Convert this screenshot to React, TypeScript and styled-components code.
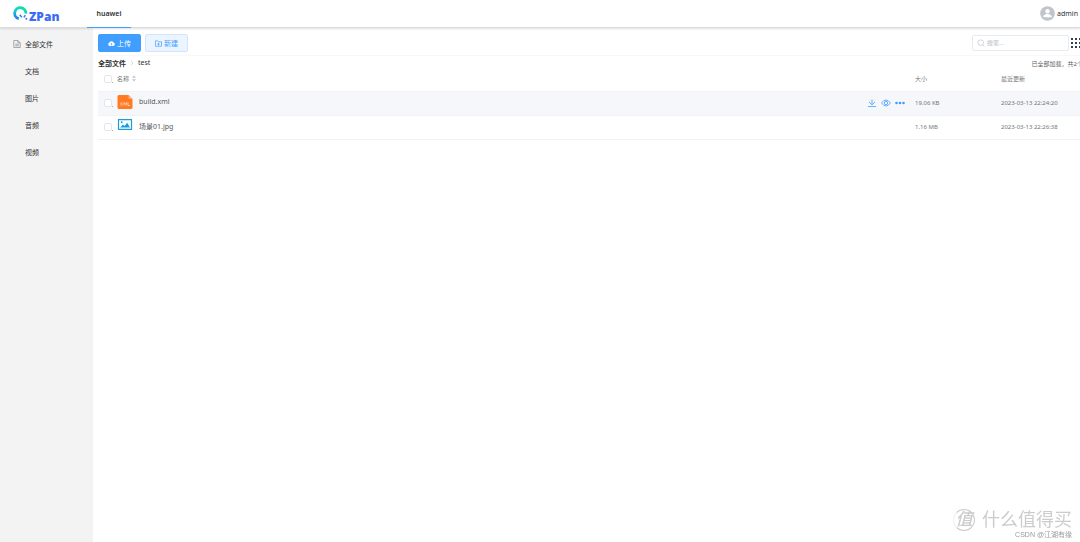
import React from "react";
import styled, { createGlobalStyle, css } from "styled-components";

const Global = createGlobalStyle`
  * { box-sizing: border-box; }
  html, body { margin: 0; overflow: hidden; background: #fff; }
  body, button, input, table {
    font-family: "Noto Sans", "Noto Sans CJK SC", sans-serif;
    font-size: 7px;
    color: #303133;
  }
`;

const Page = styled.div`
  display: flex;
  flex-direction: column;
  min-height: 100vh;
`;

const Header = styled.header`
  position: relative;
  display: flex;
  align-items: center;
  height: 28px;
  padding: 0 2px 0 13px;
  background: #fff;
  border-bottom: 1px solid #dcdcdc;
  box-shadow: 0 1px 2px rgba(0, 0, 0, 0.12);
`;

const Brand = styled.a`
  display: flex;
  align-items: center;
  width: 74px;
  height: 26px;
`;

const Tab = styled.a`
  display: flex;
  align-items: center;
  justify-content: center;
  width: 44px;
  height: 28px;
  margin-bottom: -1px;
  border-bottom: 1px solid #409eff;
  color: #303133;
  font-weight: 600;
  text-decoration: none;
`;

const User = styled.button`
  display: flex;
  align-items: center;
  gap: 2px;
  margin-left: auto;
  padding: 0;
  border: 0;
  background: none;
`;

const Body = styled.div`
  display: flex;
  flex: 1;
`;

const Sidebar = styled.nav`
  flex: none;
  width: 93px;
  padding-top: 2px;
  background: #f3f3f3;
`;

const NavLink = styled.a`
  display: flex;
  align-items: center;
  gap: 4px;
  height: 27px;
  padding-left: 13px;
  color: #303133;
  text-decoration: none;
`;

const NavIcon = styled.span`
  display: flex;
  width: 8px;
`;

const Main = styled.main`
  flex: 1;
  min-width: 0;
  padding: 6px 0 0 5px;
  overflow: hidden;
`;

const Toolbar = styled.div`
  display: flex;
  align-items: center;
  gap: 4px;
  height: 18px;
`;

const Button = styled.button<{ $primary?: boolean }>`
  display: flex;
  align-items: center;
  justify-content: center;
  gap: 2px;
  width: 43px;
  height: 18px;
  padding: 0;
  border: 1px solid #d0e6ff;
  border-radius: 2px;
  background: #ecf5ff;
  color: #409eff;
  ${(p) =>
    p.$primary &&
    css`
      border-color: #409eff;
      background: #409eff;
      color: #fff;
    `}
`;

const Search = styled.label`
  display: flex;
  align-items: center;
  gap: 2px;
  width: 97px;
  height: 16px;
  margin-left: auto;
  padding: 0 4px;
  border: 1px solid #e8eaef;
  border-radius: 2px;
`;

const SearchInput = styled.input`
  flex: 1;
  min-width: 0;
  padding: 0;
  border: 0;
  outline: 0;
  font-size: 6px;
  &::placeholder { color: #b4b8c0; }
`;

const GridButton = styled.button`
  display: flex;
  flex: none;
  margin: 0 -1px 0 -2px;
  padding: 0;
  border: 0;
  background: none;
`;

const PathBar = styled.div`
  display: flex;
  align-items: center;
  justify-content: space-between;
  height: 14px;
  margin-top: 3px;
  border-top: 1px solid #f8f8f8;
`;

const Crumbs = styled.nav`
  display: flex;
  align-items: center;
  gap: 4px;
`;

const Crumb = styled.a<{ $root?: boolean }>`
  color: #303133;
  font-weight: ${(p) => (p.$root ? 700 : 400)};
  text-decoration: none;
`;

const Count = styled.span`
  margin-right: -3px;
  padding-top: 1px;
  color: #606266;
  font-size: 6px;
  white-space: nowrap;
`;

const Table = styled.table`
  width: 100%;
  table-layout: fixed;
  border-collapse: collapse;
`;

const HeadRow = styled.tr`
  height: 22px;
  border-bottom: 1px solid #f0f2f6;
`;

const Row = styled.tr<{ $active?: boolean }>`
  height: 24px;
  border-bottom: 1px solid #f0f2f6;
  background: ${(p) => (p.$active ? "#f5f7fa" : "#fff")};
`;

const cell = css`
  padding: 0;
  color: #73767a;
  font-size: 6px;
  font-weight: 400;
  text-align: left;
  white-space: nowrap;
`;

const Th = styled.th<{ $width?: number }>`
  ${cell}
  width: ${(p) => (p.$width ? `${p.$width}px` : "auto")};
  padding-bottom: 2px;
`;

const Td = styled.td`
  ${cell}
`;

const CheckWrap = styled.span`
  display: flex;
  align-items: flex-end;
  padding-left: 6px;
  &::after {
    content: "";
    width: 1px;
    height: 1px;
    background: #a8abb2;
  }
`;

const Check = styled.input`
  appearance: none;
  width: 8px;
  height: 8px;
  margin: 0;
  border: 1px solid #e4e6eb;
  border-radius: 2px;
  background: #fff;
`;

const NameHead = styled.span`
  display: flex;
  align-items: center;
  gap: 3px;
`;

const FileName = styled.span`
  display: flex;
  align-items: center;
  gap: 6px;
  color: #55585e;
  font-size: 7px;
`;

const FileLink = styled.a`
  padding-bottom: 3px;
  color: inherit;
  text-decoration: none;
`;

const Actions = styled.span`
  display: flex;
  align-items: center;
  gap: 4px;
  margin-left: auto;
  padding-right: 10px;
`;

const IconButton = styled.button`
  display: flex;
  padding: 0;
  border: 0;
  background: none;
  color: #409eff;
`;

const Watermark = styled.aside`
  position: fixed;
  right: 8px;
  bottom: 3px;
  display: flex;
  flex-direction: column;
  align-items: flex-end;
  color: #999;
  font: 7px/8px "Liberation Sans", "Noto Sans CJK SC", sans-serif;
`;

const Stamp = styled.div`
  display: flex;
  align-items: center;
  gap: 7px;
  color: #ccc;
  font-size: 18px;
  line-height: 22px;
`;

const Seal = styled.span`
  display: flex;
  align-items: center;
  justify-content: center;
  width: 22px;
  height: 22px;
  border: 1px solid #ccc;
  border-left-color: #f0f0f0;
  border-radius: 50%;
  font-size: 17px;
  font-style: italic;
  font-weight: 500;
`;

const Logo = () => (
  <svg width="48" height="20" viewBox="0 0 48 20" role="img" aria-label="ZPan">
    <defs>
      <linearGradient id="ring" x1="0.7" y1="0" x2="0.3" y2="1">
        <stop offset="0" stopColor="#0ee3a6" />
        <stop offset="0.5" stopColor="#0cc8d8" />
        <stop offset="1" stopColor="#1a86f2" />
      </linearGradient>
    </defs>
    <path d="M5.800 14.700A5.600 5.600 0 1 1 12.900 9.600" fill="none" stroke="url(#ring)" strokeWidth="2.800" />
    <path d="M6.800 10.800l2 2.600M10.800 13.400l1.600-2.200" fill="none" stroke="#2f7bf0" strokeWidth="1.500" />
    <circle cx="13.400" cy="14.700" r="1" fill="#2f7bf0" />
    <text x="16" y="17" fontFamily="Open Sans, sans-serif" fontWeight="800" fontSize="12" fill="#3b6cf6">ZPan</text>
  </svg>
);

const files = [
  { name: "build.xml", size: "19.06 KB", date: "2023-03-13 22:24:20", kind: "xml", active: true },
  { name: "场景01.jpg", size: "1.16 MB", date: "2023-03-13 22:26:38", kind: "image", active: false },
];

const FileIcon = ({ kind }: { kind: string }) =>
  kind === "xml" ? (
    <svg width="16" height="18" viewBox="0 0 16 18">
      <path d="M2 1h9.500l4 4v8.500a1.500 1.500 0 0 1-1.500 1.500H2A1.500 1.500 0 0 1 .5 13.500v-11A1.500 1.500 0 0 1 2 1z" fill="#ff7a22" />
      <path d="M11.500 1v3a1 1 0 0 0 1 1h3z" fill="#ffb27c" />
      <path d="M3.500 8.500l2 3M5.500 8.500l-2 3M7 11.500v-3l1.300 2 1.300-2v3M11 8.500v3h2" fill="none" stroke="#ffe0c8" strokeWidth=".7" />
    </svg>
  ) : (
    <svg width="16" height="18" viewBox="0 0 16 18">
      <path d="M1.500 1.600h13v9.800h-13z" fill="#fff" stroke="#1b9ddb" strokeWidth="1.200" />
      <path d="M3.200 9.500L6 6.500l1.500 1.500L10.200 4.800l2.800 4.700z" fill="#1b9ddb" />
      <circle cx="4.700" cy="4.200" r="1" fill="#1b9ddb" />
    </svg>
  );

export default function App() {
  return (
    <Page>
      <Global />
      <Header>
        <Brand href="#"><Logo /></Brand>
        <Tab href="#">huawei</Tab>
        <User>
          <svg width="15" height="15" viewBox="0 0 15 15">
            <circle cx="7.500" cy="7.500" r="7.300" fill="#c0c4cc" />
            <circle cx="7.500" cy="5.300" r="2.200" fill="#fff" />
            <path d="M3.300 11.200V9.800L6 8h3l2.700 1.800v1.400z" fill="#fff" />
          </svg>
          admin
        </User>
      </Header>
      <Body>
        <Sidebar>
          {["全部文件", "文档", "图片", "音频", "视频"].map((label, i) => (
            <NavLink href="#" key={label}>
              <NavIcon>
                {i === 0 && (
                  <svg width="8" height="8" viewBox="0 0 8 8" fill="none" stroke="#85888e" strokeWidth=".7">
                    <path d="M.8.500h4l2.400 2.300v4.700H.8zM4.800.500v2.300h2.400M2.300 4.300h3.400M2.300 5.800h3.400" />
                  </svg>
                )}
              </NavIcon>
              {label}
            </NavLink>
          ))}
        </Sidebar>
        <Main>
          <Toolbar>
            <Button $primary>
              <svg width="7" height="7" viewBox="0 0 14 14">
                <path d="M3.500 12a3.500 3.500 0 0 1-.3-6.900 4 4 0 0 1 7.600 0A3.500 3.500 0 0 1 10.500 12z" fill="#fff" />
                <path d="M7 11V7M5 8.500l2-2 2 2" fill="none" stroke="#409eff" strokeWidth="1.300" />
              </svg>
              上传
            </Button>
            <Button>
              <svg width="7" height="7" viewBox="0 0 7 7" fill="none" stroke="currentColor" strokeWidth=".7">
                <path d="M.5.800h2l.8 1h3.200v4.500h-6zM3.500 2.800v2.600M2.200 4.100h2.600" />
              </svg>
              新建
            </Button>
            <Search>
              <svg width="8" height="8" viewBox="0 0 8 8" fill="none" stroke="#c0c4cc" strokeWidth=".7">
                <circle cx="3.700" cy="3.700" r="2.800" />
                <path d="M5.800 5.800l1.500 1.500" />
              </svg>
              <SearchInput placeholder="搜索..." aria-label="搜索" />
            </Search>
            <GridButton aria-label="网格">
              <svg width="10" height="10" viewBox="0 0 10 10" fill="#304156">
                {[0, 4, 8].map((y) => [0, 4, 8].map((x) => <rect key={`${x}-${y}`} x={x} y={y} width="2" height="2" />))}
              </svg>
            </GridButton>
          </Toolbar>
          <PathBar>
            <Crumbs>
              <Crumb href="#" $root>全部文件</Crumb>
              <svg width="4" height="6" viewBox="0 0 4 6" fill="none" stroke="#c0c4cc" strokeWidth=".7">
                <path d="M1 1l2 2-2 2" />
              </svg>
              <Crumb href="#">test</Crumb>
            </Crumbs>
            <Count>已全部加载，共2个</Count>
          </PathBar>
          <Table>
            <thead>
              <HeadRow>
                <Th $width={19}><CheckWrap><Check type="checkbox" aria-label="全选" /></CheckWrap></Th>
                <Th>
                  <NameHead>
                    名称
                    <svg width="4" height="7" viewBox="0 0 4 7" fill="#c0c4cc">
                      <path d="M0 2.800L2 .5l2 2.300zM0 4.200l2 2.300 2-2.300z" />
                    </svg>
                  </NameHead>
                </Th>
                <Th $width={86}>大小</Th>
                <Th $width={79}>最近更新</Th>
              </HeadRow>
            </thead>
            <tbody>
              {files.map((f) => (
                <Row key={f.name} $active={f.active}>
                  <Td><CheckWrap><Check type="checkbox" aria-label={f.name} /></CheckWrap></Td>
                  <Td>
                    <FileName>
                      <FileIcon kind={f.kind} />
                      <FileLink href="#">{f.name}</FileLink>
                      {f.active && (
                        <Actions>
                          <IconButton aria-label="下载">
                            <svg width="10" height="10" viewBox="0 0 10 10" fill="none" stroke="currentColor" strokeWidth=".8">
                              <path d="M5 1.500v5M2 4l3 2.800L8 4M1 8.500h8" />
                            </svg>
                          </IconButton>
                          <IconButton aria-label="查看">
                            <svg width="10" height="10" viewBox="0 0 10 10" fill="none" stroke="currentColor" strokeWidth=".8">
                              <path d="M.5 5Q5-1 9.500 5 5 11 .5 5z" />
                              <circle cx="5" cy="5" r="1.700" />
                            </svg>
                          </IconButton>
                          <IconButton aria-label="更多">
                            <svg width="10" height="10" viewBox="0 0 10 10" fill="currentColor">
                              <circle cx="1.500" cy="5" r="1.300" /><circle cx="5" cy="5" r="1.300" /><circle cx="8.500" cy="5" r="1.300" />
                            </svg>
                          </IconButton>
                        </Actions>
                      )}
                    </FileName>
                  </Td>
                  <Td>{f.size}</Td>
                  <Td>{f.date}</Td>
                </Row>
              ))}
            </tbody>
          </Table>
        </Main>
      </Body>
      <Watermark>
        <Stamp><Seal>值</Seal>什么值得买</Stamp>
        CSDN @江湖有缘
      </Watermark>
    </Page>
  );
}
